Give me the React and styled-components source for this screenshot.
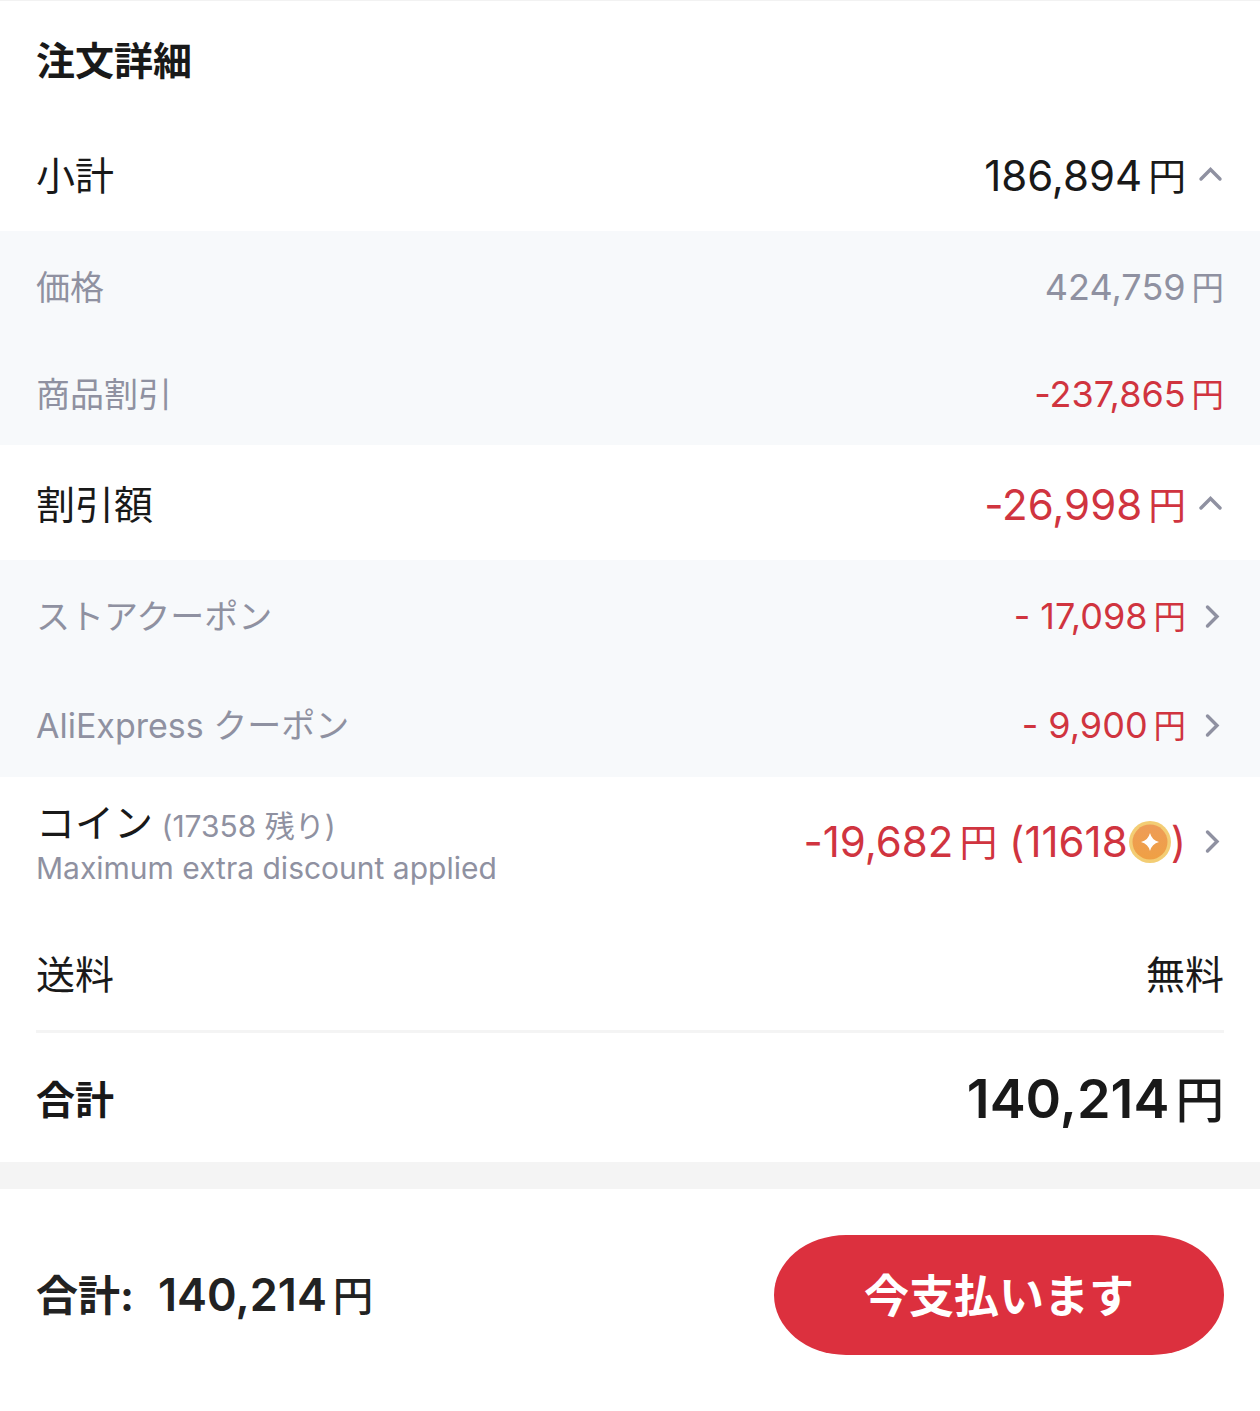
import styled, { createGlobalStyle } from "styled-components";

const GlobalStyle = createGlobalStyle`
  * {
    box-sizing: border-box;
  }
  body {
    margin: 0;
    background: #fff;
    color: #191919;
    font-family: Inter, "Noto Sans CJK JP", sans-serif;
    font-variant-ligatures: no-contextual;
  }
`;

const details = [
  { label: "価格", amount: "424,759" },
  { label: "商品割引", amount: "-237,865", red: true },
];

const coupons = [
  { label: "ストアクーポン", amount: "- 17,098" },
  { label: "AliExpress クーポン", amount: "- 9,900" },
];

const UpIcon = () => (
  <Icon viewBox="0 0 26 26" aria-hidden="true">
    <path d="M3 16 L12.5 6.5 L22 16" />
  </Icon>
);

const RightIcon = () => (
  <Icon viewBox="0 0 26 26" aria-hidden="true">
    <path d="M9.5 3 L19 12.5 L9.5 22" />
  </Icon>
);

const CoinIcon = () => (
  <Coin viewBox="0 0 42 42" role="img" aria-label="コイン">
    <defs>
      <linearGradient id="coin" x1="0" y1="0" x2="0" y2="1">
        <stop offset="0" stopColor="#ee9c58" />
        <stop offset="1" stopColor="#efa044" />
      </linearGradient>
    </defs>
    <circle cx="21" cy="21" r="21" fill="#f3cd74" />
    <circle cx="21" cy="21" r="17.5" fill="url(#coin)" />
    <path
      d="M21 12 Q22.8 19.2 30 21 Q22.8 22.8 21 30 Q19.2 22.8 12 21 Q19.2 19.2 21 12Z"
      fill="#fff"
    />
  </Coin>
);

const App = () => {
  return (
    <>
      <GlobalStyle />
      <Page>
        <Title>注文詳細</Title>

        <Row>
          <Label>小計</Label>
          <ToggleButton type="button" aria-expanded="true" aria-label="小計">
            <Price>
              186,894<Yen>円</Yen>
            </Price>
            <UpIcon />
          </ToggleButton>
        </Row>
        <SubList>
          {details.map((item) => (
            <SubRow key={item.label}>
              <SubLabel>{item.label}</SubLabel>
              <SubPrice $red={item.red}>
                {item.amount}
                <Yen>円</Yen>
              </SubPrice>
            </SubRow>
          ))}
        </SubList>

        <Row>
          <Label>割引額</Label>
          <ToggleButton type="button" aria-expanded="true" aria-label="割引額">
            <Price $red>
              -26,998<Yen>円</Yen>
            </Price>
            <UpIcon />
          </ToggleButton>
        </Row>
        <SubList>
          {coupons.map((item) => (
            <CouponRow key={item.label}>
              <SubLabel>{item.label}</SubLabel>
              <ToggleButton type="button" aria-label={item.label}>
                <SubPrice $red>
                  {item.amount}
                  <Yen>円</Yen>
                </SubPrice>
                <RightIcon />
              </ToggleButton>
            </CouponRow>
          ))}
        </SubList>

        <CoinRow>
          <CoinInfo>
            <CoinTitle>
              コイン<Remain> (17358 残り)</Remain>
            </CoinTitle>
            <CoinNote>Maximum extra discount applied</CoinNote>
          </CoinInfo>
          <ToggleButton type="button" aria-label="コイン">
            <Price $red>
              -19,682<Yen>円</Yen> (11618
              <CoinIcon />)
            </Price>
            <RightIcon />
          </ToggleButton>
        </CoinRow>

        <Row>
          <Label>送料</Label>
          <Label>無料</Label>
        </Row>
        <Line />
        <TotalRow>
          <Label $bold>合計</Label>
          <TotalPrice>
            140,214<Yen $medium>円</Yen>
          </TotalPrice>
        </TotalRow>

        <Footer>
          <FooterTotal>
            <span>合計:</span>
            <FooterPrice>
              140,214<Yen $medium>円</Yen>
            </FooterPrice>
          </FooterTotal>
          <PayButton type="button">今支払います</PayButton>
        </Footer>
      </Page>
    </>
  );
};

export default App;

const Page = styled.main`
  width: 100%;
  border-top: 1px solid #f2f2f2;
`;

const Title = styled.h1`
  margin: 0;
  padding: 32px 36px 27px;
  font-size: 39px;
  line-height: 56px;
  font-weight: 700;
`;

const Row = styled.div`
  display: flex;
  justify-content: space-between;
  align-items: center;
  height: 115px;
  padding: 4px 36px 0;
`;

const TotalRow = styled(Row)`
  height: 129px;
`;

const CoinRow = styled(Row)`
  height: 138px;
  padding: 0 36px 8px;
`;

const Label = styled.span`
  font-size: 39px;
  line-height: 56px;
  font-weight: ${(props) => (props.$bold ? 700 : 400)};
`;

const SubList = styled.div`
  display: grid;
  background: #f7f9fb;
`;

const SubRow = styled(Row)`
  height: 107px;
  padding-top: 6px;
`;

const CouponRow = styled(SubRow)`
  height: 108px;

  & + & {
    margin-top: 1px;
  }
`;

const SubLabel = styled.span`
  color: #8f91a1;
  font-size: 34px;
  line-height: 48px;
`;

const Yen = styled.span`
  margin-left: 6px;
  font-size: 0.9em;
  font-weight: ${(props) => (props.$medium ? 500 : "inherit")};
`;

const Price = styled.span`
  display: flex;
  align-items: center;
  color: ${(props) => (props.$red ? "#d0343f" : "#191919")};
  font-size: 42px;
  line-height: 56px;
  white-space: pre;
`;

const SubPrice = styled.span`
  color: ${(props) => (props.$red ? "#d0343f" : "#8f91a1")};
  font-size: 36px;
  line-height: 48px;
`;

const TotalPrice = styled.strong`
  font-size: 54px;
  line-height: 72px;
  font-weight: 600;
`;

const ToggleButton = styled.button`
  display: flex;
  align-items: center;
  gap: 12px;
  padding: 0;
  border: none;
  background: none;
  font: inherit;
  font-variant-ligatures: inherit;
  cursor: pointer;
`;

const Icon = styled.svg`
  width: 26px;
  height: 26px;
  fill: none;
  stroke: #8f91a1;
  stroke-width: 3.4;
  stroke-linecap: round;
`;

const Coin = styled.svg`
  width: 42px;
  height: 42px;
  margin-left: 1px;
`;

const CoinInfo = styled.div`
  padding-top: 4px;
`;

const CoinTitle = styled.div`
  font-size: 39px;
  line-height: 44px;
`;

const Remain = styled.span`
  color: #8f91a1;
  font-size: 30px;
`;

const CoinNote = styled.div`
  color: #8f91a1;
  font-size: 30px;
  line-height: 40px;
`;

const Line = styled.hr`
  height: 3px;
  margin: 0 36px;
  border: none;
  background: #f4f4f4;
`;

const Footer = styled.footer`
  display: flex;
  justify-content: space-between;
  align-items: center;
  padding: 46px 36px 56px;
  border-top: 27px solid #f4f4f4;
`;

const FooterTotal = styled.div`
  display: flex;
  align-items: center;
  gap: 24px;
  padding-top: 2px;
  color: #222;
  font-size: 42px;
  line-height: 56px;
  font-weight: 700;
`;

const FooterPrice = styled.strong`
  font-size: 45px;
  font-weight: 600;
`;

const PayButton = styled.button`
  width: 450px;
  height: 120px;
  padding: 0 0 4px;
  border: none;
  border-radius: 72px / 60px;
  background: #dc303e;
  color: #fff;
  font-family: inherit;
  font-size: 45px;
  font-weight: 700;
  cursor: pointer;
`;
